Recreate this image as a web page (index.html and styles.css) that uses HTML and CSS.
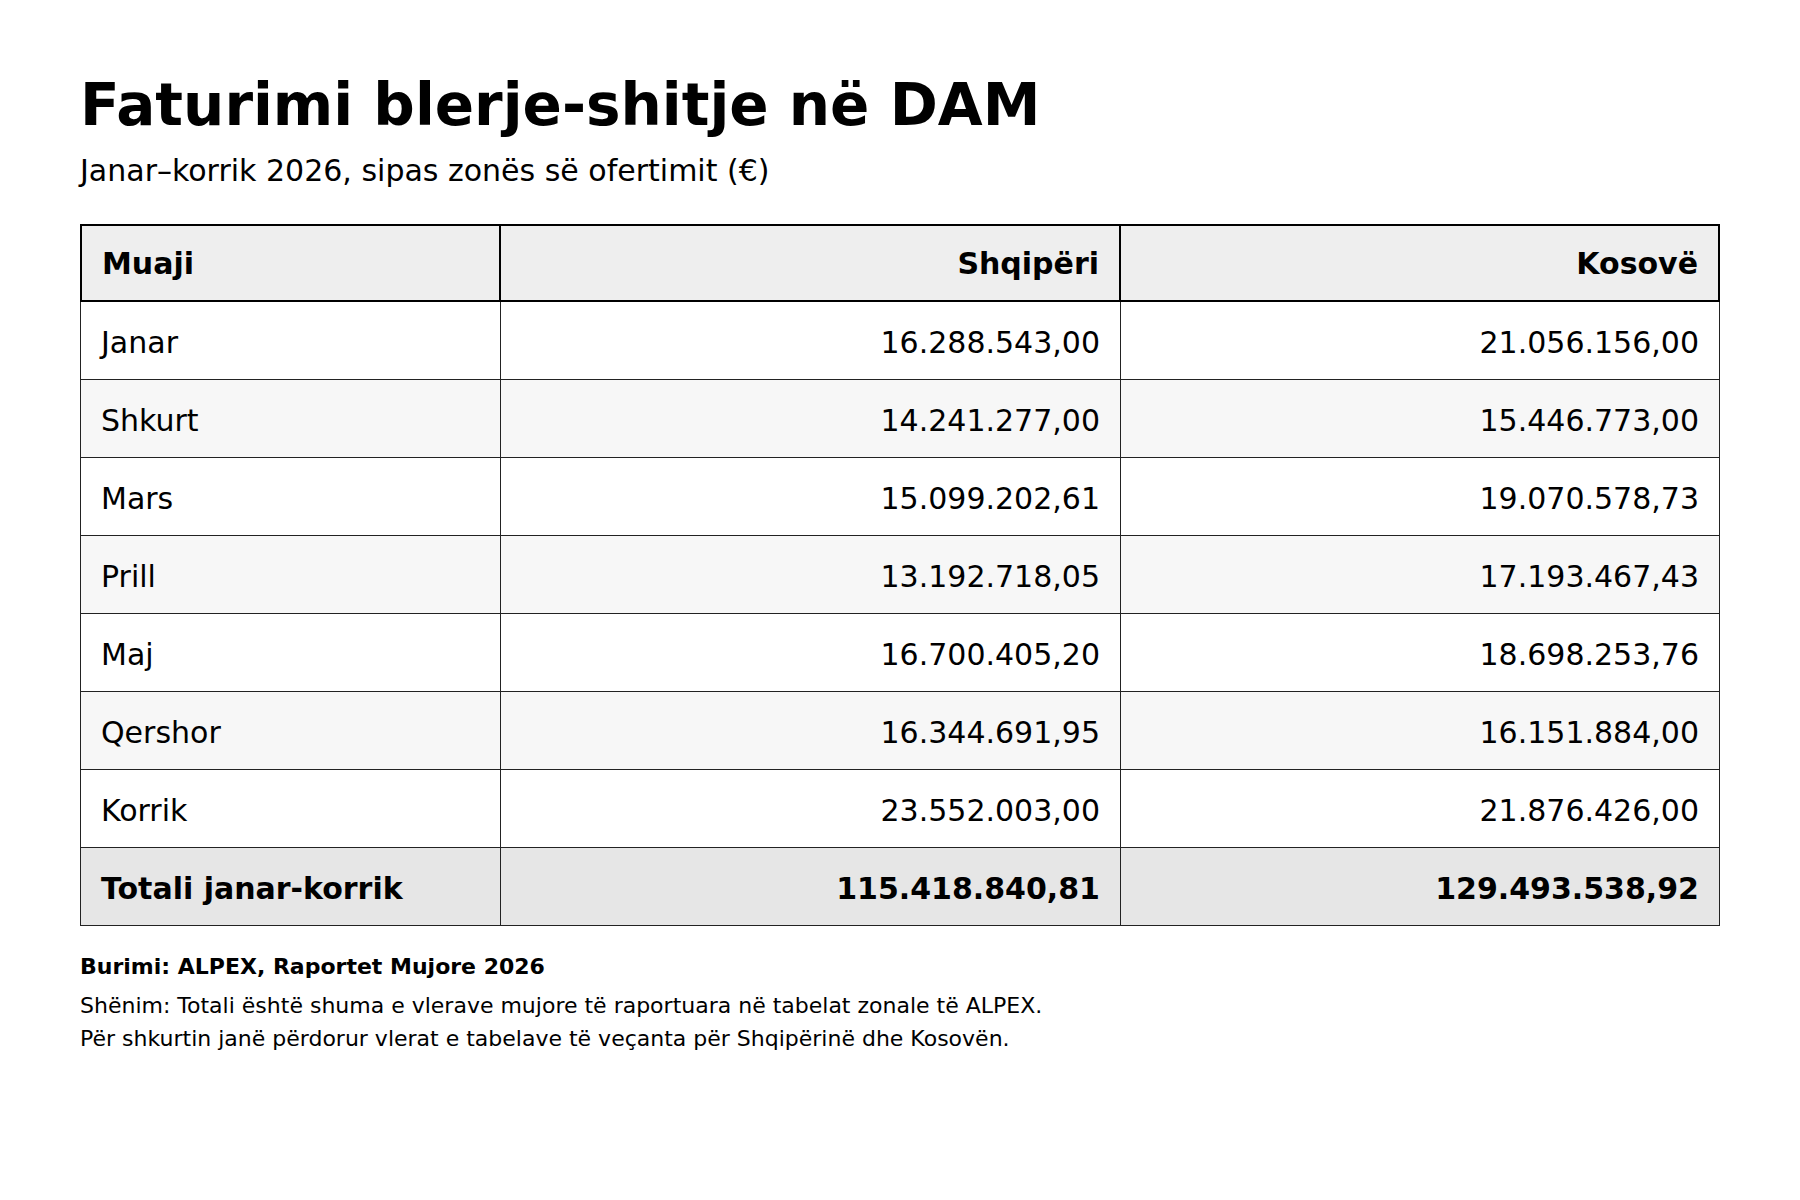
FILE: index.html
```html
<!DOCTYPE html>
<html lang="sq">
<head>
<meta charset="utf-8">
<title>Faturimi blerje-shitje në DAM</title>
<link rel="stylesheet" href="styles.css">
</head>
<body>
<main class="page">
  <h1 class="title">Faturimi blerje-shitje në DAM</h1>
  <p class="subtitle">Janar–korrik 2026, sipas zonës së ofertimit (€)</p>
  <table class="data">
    <colgroup>
      <col class="c1"><col class="c2"><col class="c3">
    </colgroup>
    <thead>
      <tr><th class="left">Muaji</th><th>Shqipëri</th><th>Kosovë</th></tr>
    </thead>
    <tbody>
      <tr><td class="left">Janar</td><td>16.288.543,00</td><td>21.056.156,00</td></tr>
      <tr><td class="left">Shkurt</td><td>14.241.277,00</td><td>15.446.773,00</td></tr>
      <tr><td class="left">Mars</td><td>15.099.202,61</td><td>19.070.578,73</td></tr>
      <tr><td class="left">Prill</td><td>13.192.718,05</td><td>17.193.467,43</td></tr>
      <tr><td class="left">Maj</td><td>16.700.405,20</td><td>18.698.253,76</td></tr>
      <tr><td class="left">Qershor</td><td>16.344.691,95</td><td>16.151.884,00</td></tr>
      <tr><td class="left">Korrik</td><td>23.552.003,00</td><td>21.876.426,00</td></tr>
      <tr class="total"><td class="left">Totali janar-korrik</td><td>115.418.840,81</td><td>129.493.538,92</td></tr>
    </tbody>
  </table>
  <p class="source">Burimi: ALPEX, Raportet Mujore 2026</p>
  <p class="note">Shënim: Totali është shuma e vlerave mujore të raportuara në tabelat zonale të ALPEX.</p>
  <p class="note">Për shkurtin janë përdorur vlerat e tabelave të veçanta për Shqipërinë dhe Kosovën.</p>
</main>
</body>
</html>
```

FILE: styles.css
```css
html, body {
  margin: 0;
  padding: 0;
  background: #ffffff;
}

body {
  font-family: "DejaVu Sans", "Liberation Sans", sans-serif;
  color: #000000;
}

.page {
  padding: 76px 80px 40px 80px;
}

.title {
  margin: 0;
  font-size: 58px;
  line-height: 58px;
  font-weight: bold;
}

.subtitle {
  margin: 22px 0 0 0;
  font-size: 30px;
  line-height: 30px;
}

.data {
  margin-top: 38px;
  width: 1640px;
  table-layout: fixed;
  border-collapse: separate;
  border-spacing: 0;
}

.c1 { width: 421px; }
.c2 { width: 620px; }
.c3 { width: 599px; }

.data th {
  background: #eeeeee;
  font-size: 30px;
  font-weight: bold;
  height: 74px;
  padding: 0 20px;
  text-align: right;
  vertical-align: middle;
  border-top: 2px solid #000;
  border-bottom: 2px solid #000;
  border-right: 2px solid #000;
  box-sizing: content-box;
}

.data th:first-child {
  border-left: 2px solid #000;
}

.data td {
  font-size: 30px;
  height: 73px;
  padding: 4px 20px 0 20px;
  text-align: right;
  vertical-align: middle;
  border-bottom: 1px solid #222;
  border-right: 1px solid #222;
  box-sizing: content-box;
}

.data td:first-child {
  border-left: 1px solid #222;
}

.data .left {
  text-align: left;
}

.data tbody tr:nth-child(even) td {
  background: #f7f7f7;
}

.data tbody tr.total td {
  background: #e6e6e6;
  font-weight: bold;
}

.source {
  margin: 24px 0 0 0;
  font-size: 22px;
  line-height: 33px;
  font-weight: bold;
}

.source + .note {
  margin-top: 6px;
}

.note {
  margin: 0;
  font-size: 22px;
  line-height: 33px;
}
```
